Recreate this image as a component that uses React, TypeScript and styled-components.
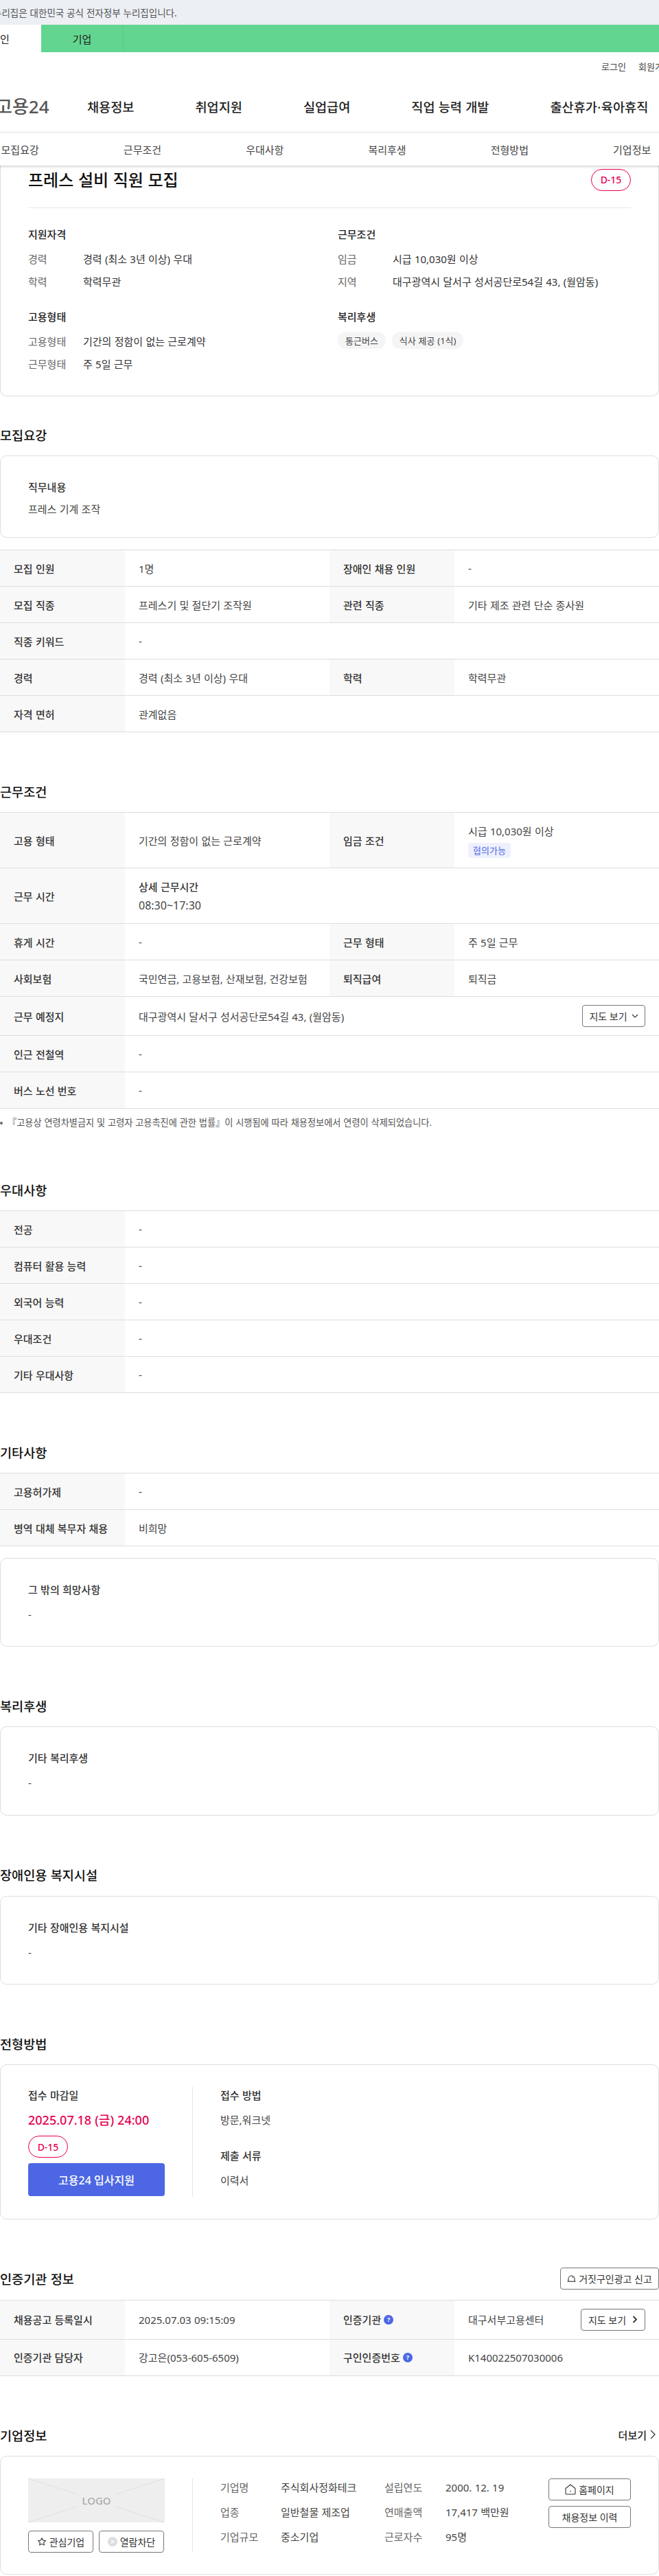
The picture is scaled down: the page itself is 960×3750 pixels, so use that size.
import React from "react";
import styled, { createGlobalStyle } from "styled-components";

const GlobalStyle = createGlobalStyle`
	html, body {
		margin: 0;
		padding: 0;
		background: #fff;
		overflow-x: hidden;
	}
	body {
		font-family: "Noto Sans", "Noto Sans CJK KR", sans-serif;
		color: #222;
		font-size: 15px;
		word-spacing: 0.4px;
	}
	* {
		box-sizing: border-box;
	}
`;

const Page = styled.div`
	width: 960px;
	height: 3750px;
	overflow: hidden;
`;

const GovBar = styled.div`
	height: 36px;
	background: #eceff4;
	display: flex;
	align-items: center;
	margin-left: -10px;
	font-size: 13.5px;
	color: #555;
	white-space: nowrap;
`;

const SiteTabs = styled.div`
	height: 40px;
	background: #62d691;
	display: flex;
	margin-left: -60px;
	width: 1020px;
`;

const SiteTab = styled.div<{ $active?: boolean }>`
	width: 120px;
	display: flex;
	align-items: center;
	justify-content: center;
	font-size: 15px;
	color: #222;
	background: ${(p) => (p.$active ? "#fff" : "transparent")};
	border-right: ${(p) => (p.$active ? "0" : "1px solid #58cc85")};
`;

const Util = styled.div`
	height: 40px;
	display: flex;
	justify-content: flex-end;
	align-items: center;
	gap: 18px;
	font-size: 13px;
	color: #444;
	margin-right: -40px;
	white-space: nowrap;
	span {
		width: 70px;
	}
	span:first-child {
		width: auto;
	}
`;

const MainNav = styled.div`
	height: 76px;
	display: flex;
	align-items: center;
	margin-left: -6px;
	white-space: nowrap;
`;

const Logo = styled.div`
	width: 133px;
	font-size: 26px;
	font-weight: 500;
	color: #555;
`;

const NavLinks = styled.div`
	display: flex;
	gap: 89px;
	font-size: 18.6px;
	font-weight: 500;
	color: #222;
`;

const MidDot = styled.span`
	display: inline-flex;
	justify-content: center;
	width: 6px;
`;

const SubTabs = styled.div`
	height: 49px;
	margin-left: -60px;
	width: 1080px;
	display: grid;
	grid-template-columns: repeat(6, 178.3px);
	align-items: center;
	justify-items: center;
	border-top: 1px solid #e4e4e4;
	box-shadow: 0 2px 3px rgba(0, 0, 0, 0.16);
	position: relative;
	z-index: 2;
	background: #fff;
	font-size: 15px;
	color: #444;
`;

const Card = styled.div`
	border: 1px solid #dedede;
	border-radius: 10px;
	padding: 0 40px;
	background: #fff;
`;

const SummaryCard = styled(Card)`
	height: 336px;
	border-top: 0;
	border-top-left-radius: 0;
	border-top-right-radius: 0;
	padding-top: 5px;
`;

const SummaryHead = styled.div`
	display: flex;
	justify-content: space-between;
	align-items: center;
	height: 57px;
	padding-bottom: 25px;
	border-bottom: 1px solid #e8e8e8;
`;

const JobTitle = styled.h1`
	margin: 0;
	font-size: 24px;
	font-weight: 500;
	color: #111;
	line-height: 32px;
`;

const DayBadge = styled.span`
	display: flex;
	align-items: center;
	justify-content: center;
	width: 58px;
	height: 32px;
	border: 1px solid #e6004f;
	border-radius: 16px;
	color: #e6004f;
	font-size: 14px;
	font-weight: 500;
`;

const SummaryGrid = styled.div`
	display: grid;
	grid-template-columns: 451px 1fr;
	padding-top: 26px;
`;

const SummaryBlock = styled.div`
	height: 120px;
`;

const BlockTitle = styled.div`
	font-size: 15px;
	font-weight: 500;
	color: #222;
	line-height: 24px;
	margin-bottom: 12px;
`;

const PairRow = styled.div`
	display: flex;
	line-height: 24px;
	height: 32.5px;
	font-size: 15px;
`;

const PairLabel = styled.span`
	width: 80px;
	color: #666;
`;

const PairValue = styled.span`
	color: #333;
`;

const Chips = styled.div`
	display: flex;
	gap: 9px;
	margin-top: -2px;
`;

const Chip = styled.span`
	height: 25px;
	padding: 0 11px;
	border-radius: 12px;
	background: #f5f5f5;
	display: inline-flex;
	align-items: center;
	font-size: 13px;
	color: #444;
`;

const SectionTitle = styled.div<{ $top: number }>`
	display: flex;
	justify-content: space-between;
	align-items: center;
	height: 32px;
	margin-top: ${(p) => p.$top}px;
	margin-bottom: 15px;
	font-size: 18.6px;
	font-weight: 500;
	color: #111;
`;

const TextCard = styled(Card)<{ $h?: number; $gap?: number }>`
	height: ${(p) => p.$h ?? 129.5}px;
	margin-top: ${(p) => p.$gap ?? 0}px;
	padding-top: 33px;
`;

const TextHead = styled.div<{ $tight?: boolean }>`
	font-size: 15px;
	font-weight: 500;
	color: #333;
	line-height: 24px;
	margin-bottom: ${(p) => (p.$tight ? 8 : 12)}px;
`;

const TextBody = styled.div`
	font-size: 15px;
	color: #444;
	line-height: 24px;
`;

const Table = styled.div<{ $gap?: number }>`
	border-top: 1px solid #dedede;
	margin-top: ${(p) => p.$gap ?? 0}px;
`;

const Row = styled.div<{ $h?: number }>`
	display: grid;
	grid-template-columns: 182px 298px 182px 298px;
	min-height: ${(p) => p.$h ?? 53}px;
	border-bottom: 1px solid #dedede;
`;

const Th = styled.div`
	background: #f8f8f8;
	padding: 0 20px;
	display: flex;
	align-items: center;
	gap: 3px;
	font-size: 15px;
	font-weight: 500;
	color: #333;
	white-space: nowrap;
`;

const Td = styled.div<{ $span?: number }>`
	grid-column: span ${(p) => p.$span ?? 1};
	padding: 0 20px;
	display: flex;
	align-items: center;
	justify-content: space-between;
	font-size: 15px;
	color: #444;
	white-space: nowrap;
`;

const StackCell = styled.div<{ $gap: number }>`
	display: flex;
	flex-direction: column;
	gap: ${(p) => p.$gap}px;
	align-items: flex-start;
	line-height: 24px;
`;

const NegoTag = styled.span`
	height: 22px;
	padding: 0 7px;
	background: #eef1fd;
	border-radius: 4px;
	color: #4d67e4;
	font-size: 13px;
	display: inline-flex;
	align-items: center;
`;

const HoursHead = styled.div`
	font-weight: 500;
	color: #333;
`;

const HoursValue = styled.div`
	font-size: 16px;
	color: #444;
`;

const OutlineButton = styled.button<{ $w?: number; $gap?: number }>`
	height: 32px;
	width: ${(p) => (p.$w ? `${p.$w}px` : "auto")};
	padding: 0;
	background: #fff;
	border: 1px solid #777;
	border-radius: 4px;
	display: inline-flex;
	align-items: center;
	justify-content: center;
	gap: ${(p) => p.$gap ?? 4}px;
	font-family: inherit;
	font-size: 14px;
	color: #333;
	white-space: nowrap;
`;

const Note = styled.div`
	margin-top: 9px;
	height: 22px;
	line-height: 22px;
	font-size: 13.2px;
	color: #555;
	padding-left: 11px;
	white-space: nowrap;
	position: relative;
	&::before {
		content: "";
		position: absolute;
		left: 0;
		top: 10px;
		width: 4px;
		height: 4px;
		border-radius: 50%;
		background: #666;
	}
`;

const ApplyCard = styled(Card)`
	height: 225.5px;
	padding-top: 32px;
	display: flex;
`;

const ApplyLeft = styled.div`
	width: 240px;
	padding-right: 41px;
	border-right: 1px solid #e4e4e4;
	height: 160px;
	flex: none;
`;

const ApplyRight = styled.div`
	padding-left: 40px;
`;

const ApplyLabel = styled.div`
	font-size: 15px;
	font-weight: 500;
	color: #333;
	line-height: 24px;
	margin-bottom: 12px;
`;

const ApplyDate = styled.div`
	font-size: 18px;
	font-weight: 500;
	color: #e6004f;
	line-height: 24px;
	margin-bottom: 11px;
	white-space: nowrap;
`;

const ApplyText = styled.div`
	font-size: 15px;
	color: #444;
	line-height: 24px;
	margin-bottom: 28px;
`;

const ApplyButton = styled.button`
	display: block;
	width: 199px;
	height: 48px;
	margin-top: 8px;
	border: 0;
	border-radius: 4px;
	background: #4d67e4;
	color: #fff;
	font-family: inherit;
	font-size: 16px;
	font-weight: 500;
`;

const Help = styled.span`
	width: 14px;
	height: 14px;
	border-radius: 50%;
	background: #4d67e4;
	color: #fff;
	font-size: 9px;
	font-weight: 700;
	display: inline-flex;
	align-items: center;
	justify-content: center;
	margin-left: 1px;
`;

const MoreLink = styled.span`
	display: inline-flex;
	align-items: center;
	gap: 5px;
	font-size: 15px;
	font-weight: 500;
	color: #222;
	padding-right: 5px;
`;

const CompanyCard = styled(Card)`
	height: 173px;
	padding-top: 32px;
	display: flex;
`;

const CompanyLeft = styled.div`
	width: 240px;
	padding-right: 41px;
	border-right: 1px solid #e4e4e4;
	height: 108px;
	flex: none;
`;

const LogoBox = styled.div`
	width: 199px;
	height: 64px;
	background: #eee;
	position: relative;
	display: flex;
	align-items: center;
	justify-content: center;
	font-size: 15px;
	font-weight: 500;
	color: #aaa;
	svg {
		position: absolute;
		inset: 0;
	}
	span {
		position: relative;
		background: #eee;
		padding: 0 6px;
	}
`;

const CompanyActions = styled.div`
	display: grid;
	grid-template-columns: 95px 95px;
	justify-content: space-between;
	margin-top: 12px;
`;

const CompanyInfo = styled.div`
	display: grid;
	grid-template-columns: 88px 151px 89px 1fr;
	grid-auto-rows: 36px;
	width: 438px;
	padding-left: 40px;
	box-sizing: content-box;
	margin-top: -5px;
	font-size: 15px;
	color: #444;
	line-height: 36px;
	white-space: nowrap;
`;

const InfoLabel = styled.span`
	color: #666;
`;

const CompanyButtons = styled.div`
	margin-left: auto;
	display: flex;
	flex-direction: column;
	gap: 8px;
`;

const ChevronDown = () => (
	<svg width="10" height="10" viewBox="0 0 10 10" fill="none" stroke="#333" strokeWidth="1.2">
		<path d="M1 3l4 4 4-4" />
	</svg>
);

const ChevronRight = () => (
	<svg width="8" height="11" viewBox="0 0 8 11" fill="none" stroke="#333" strokeWidth="1.8">
		<path d="M1.5 1 6 5.5 1.5 10" />
	</svg>
);

const ThinChevron = () => (
	<svg width="8" height="14" viewBox="0 0 8 14" fill="none" stroke="#333" strokeWidth="1.2">
		<path d="M1 1l6 6-6 6" />
	</svg>
);

const HouseIcon = () => (
	<svg width="16" height="16" viewBox="0 0 16 16" fill="none" stroke="#333" strokeWidth="1.1" strokeLinejoin="round">
		<path d="M1 6.5 8 1l7 5.5V14a1 1 0 0 1-1 1H2a1 1 0 0 1-1-1z" />
		<path d="M8 9.5v2" />
	</svg>
);

const BellIcon = () => (
	<svg width="13" height="11" viewBox="0 0 13 11" fill="none" stroke="#333" strokeWidth="1.1">
		<path d="M2 10V6.5a4.5 4.5 0 0 1 9 0V10" />
		<path d="M.5 10.2h12" />
		<path d="M8 3.5 8.6 5" />
	</svg>
);

const StarIcon = () => (
	<svg width="14" height="14" viewBox="0 0 24 24" fill="none" stroke="#444" strokeWidth="2" strokeLinejoin="round">
		<path d="m12 2.8 2.9 5.9 6.5.9-4.7 4.6 1.1 6.5-5.8-3-5.8 3 1.1-6.5L2.6 9.6l6.5-.9z" />
	</svg>
);

const BlockIcon = () => (
	<svg width="14" height="14" viewBox="0 0 14 14">
		<circle cx="7" cy="7" r="7" fill="#ddd" />
		<path d="m4.6 4.6 4.8 4.8m0-4.8-4.8 4.8" stroke="#fff" strokeWidth="1.3" />
	</svg>
);

const LogoCross = () => (
	<svg width="199" height="64" viewBox="0 0 199 64" fill="none" stroke="#dfdfdf" strokeWidth="1">
		<path d="M0 0 199 64M199 0 0 64" />
	</svg>
);

const rows = (items: [string, string][]) =>
	items.map(([label, value]) => (
		<Row key={label}>
			<Th>{label}</Th>
			<Td $span={3}>{value}</Td>
		</Row>
	));

export default function App() {
	return (
		<Page>
			<GlobalStyle />
			<GovBar>누리집은 대한민국 공식 전자정부 누리집입니다.</GovBar>
			<SiteTabs>
				<SiteTab $active>개인</SiteTab>
				<SiteTab>기업</SiteTab>
			</SiteTabs>
			<Util>
				<span>로그인</span>
				<span>회원가입</span>
			</Util>
			<MainNav>
				<Logo>고용24</Logo>
				<NavLinks>
					<span>채용정보</span>
					<span>취업지원</span>
					<span>실업급여</span>
					<span>직업 능력 개발</span>
					<span>
						출산휴가<MidDot>·</MidDot>육아휴직
					</span>
				</NavLinks>
			</MainNav>
			<SubTabs>
				<span>모집요강</span>
				<span>근무조건</span>
				<span>우대사항</span>
				<span>복리후생</span>
				<span>전형방법</span>
				<span>기업정보</span>
			</SubTabs>

			<SummaryCard>
				<SummaryHead>
					<JobTitle>프레스 설비 직원 모집</JobTitle>
					<DayBadge>D-15</DayBadge>
				</SummaryHead>
				<SummaryGrid>
					<SummaryBlock>
						<BlockTitle>지원자격</BlockTitle>
						<PairRow>
							<PairLabel>경력</PairLabel>
							<PairValue>경력 (최소 3년 이상) 우대</PairValue>
						</PairRow>
						<PairRow>
							<PairLabel>학력</PairLabel>
							<PairValue>학력무관</PairValue>
						</PairRow>
					</SummaryBlock>
					<SummaryBlock>
						<BlockTitle>근무조건</BlockTitle>
						<PairRow>
							<PairLabel>임금</PairLabel>
							<PairValue>시급 10,030원 이상</PairValue>
						</PairRow>
						<PairRow>
							<PairLabel>지역</PairLabel>
							<PairValue>대구광역시 달서구 성서공단로54길 43, (월암동)</PairValue>
						</PairRow>
					</SummaryBlock>
					<SummaryBlock>
						<BlockTitle>고용형태</BlockTitle>
						<PairRow>
							<PairLabel>고용형태</PairLabel>
							<PairValue>기간의 정함이 없는 근로계약</PairValue>
						</PairRow>
						<PairRow>
							<PairLabel>근무형태</PairLabel>
							<PairValue>주 5일 근무</PairValue>
						</PairRow>
					</SummaryBlock>
					<SummaryBlock>
						<BlockTitle>복리후생</BlockTitle>
						<Chips>
							<Chip>통근버스</Chip>
							<Chip>식사 제공 (1식)</Chip>
						</Chips>
					</SummaryBlock>
				</SummaryGrid>
			</SummaryCard>

			<SectionTitle $top={39}>모집요강</SectionTitle>
			<TextCard $h={120}>
				<TextHead $tight>직무내용</TextHead>
				<TextBody>프레스 기계 조작</TextBody>
			</TextCard>
			<Table $gap={17}>
				<Row>
					<Th>모집 인원</Th>
					<Td>1명</Td>
					<Th>장애인 채용 인원</Th>
					<Td>-</Td>
				</Row>
				<Row>
					<Th>모집 직종</Th>
					<Td>프레스기 및 절단기 조작원</Td>
					<Th>관련 직종</Th>
					<Td>기타 제조 관련 단순 종사원</Td>
				</Row>
				<Row>
					<Th>직종 키워드</Th>
					<Td $span={3}>-</Td>
				</Row>
				<Row>
					<Th>경력</Th>
					<Td>경력 (최소 3년 이상) 우대</Td>
					<Th>학력</Th>
					<Td>학력무관</Td>
				</Row>
				<Row>
					<Th>자격 면허</Th>
					<Td $span={3}>관계없음</Td>
				</Row>
			</Table>

			<SectionTitle $top={69}>근무조건</SectionTitle>
			<Table>
				<Row $h={81}>
					<Th>고용 형태</Th>
					<Td>기간의 정함이 없는 근로계약</Td>
					<Th>임금 조건</Th>
					<Td>
						<StackCell $gap={5}>
							<span>시급 10,030원 이상</span>
							<NegoTag>협의가능</NegoTag>
						</StackCell>
					</Td>
				</Row>
				<Row $h={81}>
					<Th>근무 시간</Th>
					<Td $span={3}>
						<StackCell $gap={3}>
							<HoursHead>상세 근무시간</HoursHead>
							<HoursValue>08:30~17:30</HoursValue>
						</StackCell>
					</Td>
				</Row>
				<Row>
					<Th>휴게 시간</Th>
					<Td>-</Td>
					<Th>근무 형태</Th>
					<Td>주 5일 근무</Td>
				</Row>
				<Row>
					<Th>사회보험</Th>
					<Td>국민연금, 고용보험, 산재보험, 건강보험</Td>
					<Th>퇴직급여</Th>
					<Td>퇴직금</Td>
				</Row>
				<Row $h={57}>
					<Th>근무 예정지</Th>
					<Td $span={3}>
						대구광역시 달서구 성서공단로54길 43, (월암동)
						<OutlineButton $w={92} $gap={6}>
							지도 보기 <ChevronDown />
						</OutlineButton>
					</Td>
				</Row>
				{rows([
					["인근 전철역", "-"],
					["버스 노선 번호", "-"],
				])}
			</Table>
			<Note>『고용상 연령차별금지 및 고령자 고용촉진에 관한 법률』이 시행됨에 따라 채용정보에서 연령이 삭제되었습니다.</Note>

			<SectionTitle $top={70}>우대사항</SectionTitle>
			<Table>
				{rows([
					["전공", "-"],
					["컴퓨터 활용 능력", "-"],
					["외국어 능력", "-"],
					["우대조건", "-"],
					["기타 우대사항", "-"],
				])}
			</Table>

			<SectionTitle $top={69}>기타사항</SectionTitle>
			<Table>
				{rows([
					["고용허가제", "-"],
					["병역 대체 복무자 채용", "비희망"],
				])}
			</Table>
			<TextCard $gap={16.5}>
				<TextHead>그 밖의 희망사항</TextHead>
				<TextBody>-</TextBody>
			</TextCard>

			<SectionTitle $top={69}>복리후생</SectionTitle>
			<TextCard>
				<TextHead>기타 복리후생</TextHead>
				<TextBody>-</TextBody>
			</TextCard>

			<SectionTitle $top={70}>장애인용 복지시설</SectionTitle>
			<TextCard>
				<TextHead>기타 장애인용 복지시설</TextHead>
				<TextBody>-</TextBody>
			</TextCard>

			<SectionTitle $top={69}>전형방법</SectionTitle>
			<ApplyCard>
				<ApplyLeft>
					<ApplyLabel>접수 마감일</ApplyLabel>
					<ApplyDate>2025.07.18 (금) 24:00</ApplyDate>
					<DayBadge>D-15</DayBadge>
					<ApplyButton>고용24 입사지원</ApplyButton>
				</ApplyLeft>
				<ApplyRight>
					<ApplyLabel>접수 방법</ApplyLabel>
					<ApplyText>방문,워크넷</ApplyText>
					<ApplyLabel>제출 서류</ApplyLabel>
					<ApplyText>이력서</ApplyText>
				</ApplyRight>
			</ApplyCard>

			<SectionTitle $top={70}>
				인증기관 정보
				<OutlineButton $w={144}>
					<BellIcon /> 거짓구인광고 신고
				</OutlineButton>
			</SectionTitle>
			<Table $gap={1.5}>
				<Row $h={57}>
					<Th>채용공고 등록일시</Th>
					<Td>2025.07.03 09:15:09</Td>
					<Th>
						인증기관 <Help>?</Help>
					</Th>
					<Td>
						대구서부고용센터
						<OutlineButton $w={94} $gap={9}>
							지도 보기 <ChevronRight />
						</OutlineButton>
					</Td>
				</Row>
				<Row>
					<Th>인증기관 담당자</Th>
					<Td>강고은(053-605-6509)</Td>
					<Th>
						구인인증번호 <Help>?</Help>
					</Th>
					<Td>K140022507030006</Td>
				</Row>
			</Table>

			<SectionTitle $top={69.5}>
				기업정보
				<MoreLink>
					더보기 <ThinChevron />
				</MoreLink>
			</SectionTitle>
			<CompanyCard>
				<CompanyLeft>
					<LogoBox>
						<LogoCross />
						<span>LOGO</span>
					</LogoBox>
					<CompanyActions>
						<OutlineButton>
							<StarIcon /> 관심기업
						</OutlineButton>
						<OutlineButton>
							<BlockIcon /> 열람차단
						</OutlineButton>
					</CompanyActions>
				</CompanyLeft>
				<CompanyInfo>
					<InfoLabel>기업명</InfoLabel>
					<span>주식회사정화테크</span>
					<InfoLabel>설립연도</InfoLabel>
					<span>2000. 12. 19</span>
					<InfoLabel>업종</InfoLabel>
					<span>일반철물 제조업</span>
					<InfoLabel>연매출액</InfoLabel>
					<span>17,417 백만원</span>
					<InfoLabel>기업규모</InfoLabel>
					<span>중소기업</span>
					<InfoLabel>근로자수</InfoLabel>
					<span>95명</span>
				</CompanyInfo>
				<CompanyButtons>
					<OutlineButton $w={120}>
						<HouseIcon /> 홈페이지
					</OutlineButton>
					<OutlineButton $w={120}>채용정보 이력</OutlineButton>
				</CompanyButtons>
			</CompanyCard>
		</Page>
	);
}
